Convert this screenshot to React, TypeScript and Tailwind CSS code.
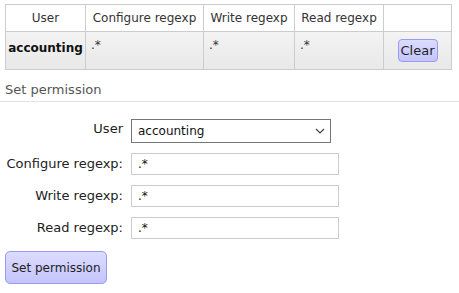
import React, { useState } from "react";

const users = ["accounting", "guest", "admin"];

const App: React.FC = () => {
  const [user, setUser] = useState("accounting");

  const fields = [
    { label: "Configure regexp:", value: ".*" },
    { label: "Write regexp:", value: ".*" },
    { label: "Read regexp:", value: ".*" },
  ];

  return (
    <div
      className="w-[459px] h-[293px] bg-white text-[12px] text-[#333] overflow-hidden"
      style={{ fontFamily: "Verdana, 'DejaVu Sans', sans-serif" }}
    >
      <div className="pt-[4px] pl-[5px]">
        <table className="border-collapse w-[447px] table-fixed">
          <thead>
            <tr className="h-[27px]">
              <th className="w-[80px] border border-[#ccc] font-normal text-center">User</th>
              <th className="w-[118px] border border-[#ccc] font-normal text-center">Configure regexp</th>
              <th className="w-[91px] border border-[#ccc] font-normal text-center">Write regexp</th>
              <th className="w-[89px] border border-[#ccc] font-normal text-center">Read regexp</th>
              <th className="border border-[#ccc]"></th>
            </tr>
          </thead>
          <tbody>
            <tr className="h-[38px] bg-gradient-to-b from-[#f3f3f3] to-[#e8e8e8]">
              <td className="border border-[#ccc] align-top pt-[7px] text-center font-bold text-[#111]">accounting</td>
              <td className="border border-[#ccc] align-top pt-[4px] pl-[5px]">.*</td>
              <td className="border border-[#ccc] align-top pt-[4px] pl-[5px]">.*</td>
              <td className="border border-[#ccc] align-top pt-[4px] pl-[5px]">.*</td>
              <td className="border border-[#ccc] text-center align-middle">
                <button className="w-[40px] h-[23px] rounded-[4px] border border-[#9a9af0] bg-gradient-to-b from-[#dcdcff] to-[#c4c4fc] text-[13px] text-[#222]">
                  Clear
                </button>
              </td>
            </tr>
          </tbody>
        </table>
      </div>

      <div className="mt-[12px] pl-[5px] pb-[3px] leading-[16px] border-b border-[#e2e2e2] text-[13px] text-[#555]">
        Set permission
      </div>

      <div className="pl-[5px] pt-[17px] flex flex-col gap-[10px]">
        <div className="flex items-center gap-[8px]">
          <label className="w-[118px] text-right text-[13px] text-[#222] -mt-[4px]">User</label>
          <div className="relative">
            <select
              value={user}
              onChange={(e) => setUser(e.target.value)}
              className="appearance-none w-[200px] h-[24px] border border-[#767676] bg-white pl-[6px] text-[12px] text-[#111] outline-none"
              style={{ fontFamily: "Verdana, 'DejaVu Sans', sans-serif" }}
            >
              {users.map((u) => (
                <option key={u} value={u}>
                  {u}
                </option>
              ))}
            </select>
            <svg
              className="absolute right-[6px] top-[9px] pointer-events-none"
              width="10"
              height="6"
              viewBox="0 0 10 6"
              fill="none"
            >
              <path d="M1 1l4 4 4-4" stroke="#444" strokeWidth="1.2" />
            </svg>
          </div>
        </div>

        {fields.map((f) => (
          <div key={f.label} className="flex items-center gap-[8px]">
            <label className="w-[118px] text-right text-[13px] text-[#222] whitespace-nowrap">{f.label}</label>
            <input
              defaultValue={f.value}
              className="w-[208px] h-[22px] border border-[#ccc] pl-[6px] text-[12px] text-[#111] outline-none"
              style={{ fontFamily: "Verdana, 'DejaVu Sans', sans-serif" }}
            />
          </div>
        ))}

        <div className="pt-[2px]">
          <button className="w-[102px] h-[33px] rounded-[5px] border border-[#9a9af0] bg-gradient-to-b from-[#dcdcff] to-[#c4c4fc] text-[12px] text-[#222]">
            Set permission
          </button>
        </div>
      </div>
    </div>
  );
};

export default App;
